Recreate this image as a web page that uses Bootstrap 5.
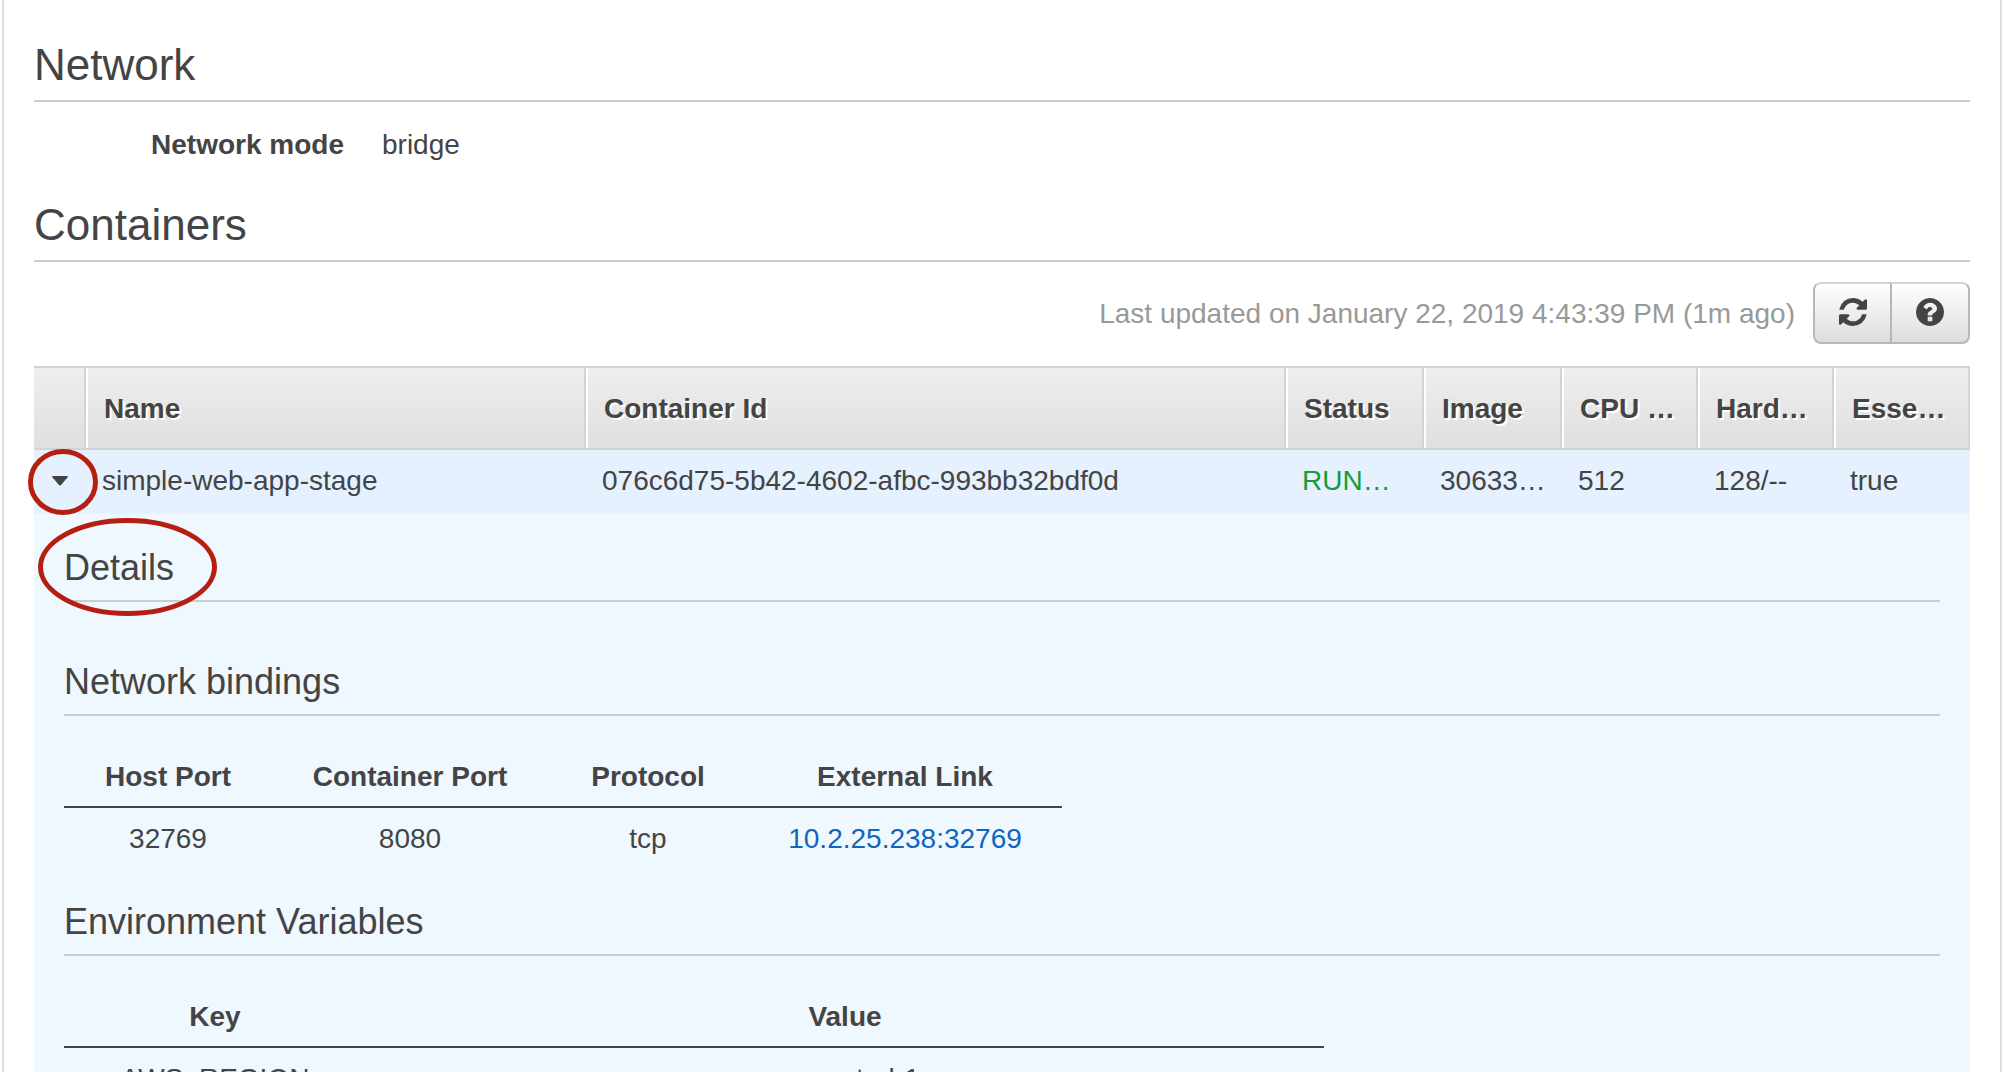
<!DOCTYPE html>
<html lang="en">
<head>
<meta charset="utf-8">
<meta name="viewport" content="width=device-width, initial-scale=1">
<title>Task: Network and Containers</title>
<link href="https://cdn.jsdelivr.net/npm/bootstrap@5.3.0/dist/css/bootstrap.min.css" rel="stylesheet">
<style>
  body { font-family: "Liberation Sans", Arial, sans-serif; font-size: 28px; line-height: 42px; color: #444; }
  .task-panel { margin: 0 2px; border: solid #ddd; border-width: 0 2px; padding: 40px 30px 0; }
  .rule-title { border-bottom: 2px solid #ccc; margin: 0; font-weight: 400; color: #444; }
  h2.rule-title { font-size: 44px; line-height: 50px; padding-bottom: 10px; }
  h3.rule-title, h4.rule-title { font-size: 36px; line-height: 40px; padding-bottom: 12px; }
  .mode-list { margin: 22px 0 34px; }
  .mode-list dt { width: 310px; text-align: right; }
  .mode-list dd { margin: 0 0 0 38px; }
  .table-tools { padding: 20px 0 22px; }
  .updated-at { color: #999; margin-right: 18px; padding-top: 2px; }
  .tool-btn { width: 80px; height: 62px; border: 2px solid #b7b7b7; border-top-color: #d5d5d5; border-radius: 8px;
    background: linear-gradient(#fff, #ddd); color: #444; padding: 0; display: flex; align-items: center; justify-content: center; }
  .tool-btn:hover { background: #e6e6e6; border-color: #b7b7b7; }
  .tool-btn svg { width: 28px; height: 28px; fill: currentColor; margin-bottom: 2px; }
  .btn-group > .tool-btn:first-child { width: 78px; border-right: 0; }
  .btn-group > .tool-btn:last-child { margin-left: 0; }
  .container-grid { table-layout: fixed; width: 100%; border-collapse: separate; border-spacing: 0; }
  .col-toggle { width: 52px; } .col-name { width: 500px; } .col-mid { width: 138px; } .col-end { width: 136px; }
  .container-grid > thead th { height: 84px; padding: 2px 8px 0 18px; background: linear-gradient(#eee, #dfdfdf); box-shadow: inset 2px 0 #fff;
    border: solid #d3d3d3; border-width: 2px 2px 2px 0; text-shadow: 2px 2px 0 #fff; white-space: nowrap; overflow: hidden; }
  .container-grid > thead td { background: linear-gradient(#eee, #dfdfdf); border: solid #d3d3d3; border-width: 2px 2px 2px 0; }
  .item-row > td { background: #e5f1fe; padding: 10px 0 12px 16px; white-space: nowrap; }
  .item-row > td.toggle-cell { padding: 0; }
  .toggle-btn { width: 52px; height: 64px; border: 0; background: none; padding: 0; }
  .toggle-btn .caret-down { width: 16px; height: 10px; fill: #444; display: block; margin: 0 auto 2px; }
  .status-run { color: #159c36; }
  .details-cell { background: #f0f8ff; padding: 34px 30px 80px; }
  .sub-title { margin-top: 60px !important; }
  .plain-grid { table-layout: fixed; margin: 40px 0 0; text-align: center; }
  .plain-grid th { padding: 0 0 8px; border-bottom: 2px solid #444; }
  .plain-grid td { padding: 10px 0; }
  .ports-grid { width: 998px; } .env-grid { width: 1260px; }
  .w-host { width: 208px; } .w-cport { width: 276px; } .w-proto { width: 200px; } .w-key { width: 302px; }
  .env-title { margin-top: 32px !important; }
  .ext-link { color: #1166bb; text-decoration: none; }
  .ring { position: absolute; fill: none; stroke: #b51f10; stroke-width: 5; pointer-events: none; overflow: visible; }
  .ring-toggle { left: -6px; top: -1px; width: 70px; height: 66px; }
  .ring-details { left: -26px; top: -30px; width: 180px; height: 98px; }
</style>
</head>
<body>
<main class="task-panel vh-100 overflow-hidden">
  <section>
    <h2 class="rule-title">Network</h2>
    <dl class="mode-list d-flex">
      <dt>Network mode</dt>
      <dd>bridge</dd>
    </dl>
  </section>

  <section>
    <h2 class="rule-title">Containers</h2>
    <div class="table-tools d-flex justify-content-end align-items-center">
      <span class="updated-at">Last updated on January 22, 2019 4:43:39 PM (1m ago)</span>
      <div class="btn-group">
        <button type="button" class="btn tool-btn" aria-label="Refresh">
          <svg viewBox="0 0 1536 1536" aria-hidden="true"><path d="M1511 928q0 5-1 7-64 268-268 434.5t-478 166.5q-146 0-282.5-55t-243.5-157l-129 129q-19 19-45 19t-45-19-19-45v-448q0-26 19-45t45-19h448q26 0 45 19t19 45-19 45l-137 137q71 66 161 102t187 36q134 0 250-65t186-179q11-17 53-117 8-23 30-23h192q13 0 22.500 9.500t9.500 22.500zm25-800v448q0 26-19 45t-45 19h-448q-26 0-45-19t-19-45 19-45l138-138q-148-137-349-137-134 0-250 65t-186 179q-11 17-53 117-8 23-30 23h-199q-13 0-22.500-9.500t-9.500-22.500v-7q65-268 270-434.500t480-166.500q146 0 284 55.500t245 156.500l130-129q19-19 45-19t45 19 19 45z"/></svg>
        </button>
        <button type="button" class="btn tool-btn" aria-label="Help">
          <svg viewBox="128 128 1536 1536" aria-hidden="true"><path d="M1024 1376v-192q0-14-9-23t-23-9h-192q-14 0-23 9t-9 23v192q0 14 9 23t23 9h192q14 0 23-9t9-23zm256-672q0-88-55.500-163t-138.500-116-170-41q-243 0-371 213-15 24 8 42l132 100q7 6 19 6 16 0 25-12 53-68 86-92 34-24 86-24 48 0 85.500 26t37.500 59q0 38-20 61t-68 45q-63 28-115.500 86.500t-52.500 125.500v36q0 14 9 23t23 9h192q14 0 23-9t9-23q0-19 21.500-49.500t54.500-49.500q32-18 49-28.500t46-35 44.500-48 28-60.500 12.500-81zm384 192q0 209-103 385.500t-279.500 279.500-385.500 103-385.500-103-279.500-279.500-103-385.500 103-385.500 279.500-279.500 385.500-103 385.500 103 279.500 279.500 103 385.500z"/></svg>
        </button>
      </div>
    </div>

    <table class="container-grid">
      <colgroup>
        <col class="col-toggle"><col class="col-name"><col>
        <col class="col-mid"><col class="col-mid">
        <col class="col-end"><col class="col-end"><col class="col-end">
      </colgroup>
      <thead>
        <tr>
          <td></td>
          <th scope="col">Name</th>
          <th scope="col">Container Id</th>
          <th scope="col">Status</th>
          <th scope="col">Image</th>
          <th scope="col">CPU …</th>
          <th scope="col">Hard…</th>
          <th scope="col">Esse…</th>
        </tr>
      </thead>
      <tbody>
        <tr class="item-row">
          <td class="toggle-cell">
            <div class="position-relative d-flex">
              <button type="button" class="toggle-btn" aria-label="Collapse details" aria-expanded="true">
                <svg class="caret-down" viewBox="0 0 16 10" aria-hidden="true"><path d="M1 0h14q1.500 0 .5 1.500L9 9q-1 1-2 0L.5 1.500Q-.5 0 1 0z"/></svg>
              </button>
              <svg class="ring ring-toggle" viewBox="0 0 70 66" aria-hidden="true"><ellipse cx="35" cy="33" rx="32.500" ry="30.500"/></svg>
            </div>
          </td>
          <td>simple-web-app-stage</td>
          <td>076c6d75-5b42-4602-afbc-993bb32bdf0d</td>
          <td class="status-run">RUN…</td>
          <td>30633…</td>
          <td>512</td>
          <td>128/--</td>
          <td>true</td>
        </tr>
        <tr>
          <td class="details-cell" colspan="8">
            <div class="position-relative">
              <h3 class="rule-title">Details</h3>
              <svg class="ring ring-details" viewBox="0 0 180 98" aria-hidden="true"><ellipse cx="89.500" cy="49" rx="87" ry="46.500"/></svg>
            </div>

            <h4 class="rule-title sub-title">Network bindings</h4>
            <table class="plain-grid ports-grid">
              <colgroup><col class="w-host"><col class="w-cport"><col class="w-proto"><col></colgroup>
              <thead>
                <tr><th scope="col">Host Port</th><th scope="col">Container Port</th><th scope="col">Protocol</th><th scope="col">External Link</th></tr>
              </thead>
              <tbody>
                <tr><td>32769</td><td>8080</td><td>tcp</td><td><a class="ext-link" href="#">10.2.25.238:32769</a></td></tr>
              </tbody>
            </table>

            <h4 class="rule-title env-title">Environment Variables</h4>
            <table class="plain-grid env-grid">
              <colgroup><col class="w-key"><col></colgroup>
              <thead>
                <tr><th scope="col">Key</th><th scope="col">Value</th></tr>
              </thead>
              <tbody>
                <tr><td>AWS_REGION</td><td>eu-central-1</td></tr>
              </tbody>
            </table>
          </td>
        </tr>
      </tbody>
    </table>
  </section>
</main>
<script src="https://cdn.jsdelivr.net/npm/bootstrap@5.3.0/dist/js/bootstrap.bundle.min.js"></script>
</body>
</html>
